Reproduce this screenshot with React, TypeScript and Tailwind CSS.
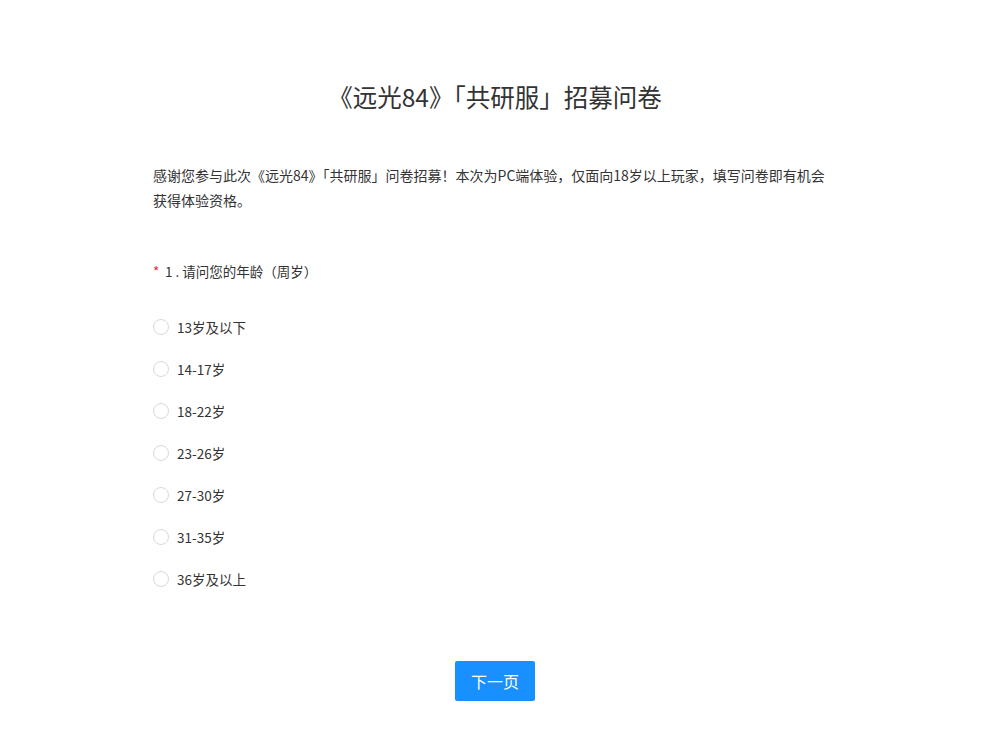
import { useState } from 'react';

const options = ['13岁及以下', '14-17岁', '18-22岁', '23-26岁', '27-30岁', '31-35岁', '36岁及以上'];

export default function App() {
    const [picked, setPicked] = useState<number | null>(null);

    return (
        <div className="min-h-screen bg-white text-[#333] font-['Noto_Sans_CJK_SC','Noto_Sans',sans-serif]">
            <div className="w-[684px] mx-auto pt-[79px] pb-7">
                {/* Titel */}
                <h1 className="text-center text-[24.5px] leading-9 font-normal">《远光84》「共研服」招募问卷</h1>

                {/* Einleitung */}
                <p className="mt-[48px] text-[14px] leading-[25px]">
                    感谢您参与此次《远光84》「共研服」问卷招募！本次为PC端体验，仅面向18岁以上玩家，填写问卷即有机会获得体验资格。
                </p>

                {/* Frage */}
                <div className="mt-[48px] text-[13.5px] leading-5 flex items-center">
                    <span className="text-[#f5222d] w-3">*</span>
                    <span>1 . 请问您的年龄（周岁）</span>
                </div>

                <div className="mt-[25px] flex flex-col">
                    {options.map((opt, i) => (
                        <label key={opt} className="h-[42px] flex items-center cursor-pointer text-[13.5px]">
                            <input
                                type="radio"
                                name="age"
                                className="sr-only"
                                checked={picked === i}
                                onChange={() => setPicked(i)}
                            />
                            <span className="w-4 h-4 rounded-full border border-[#d9d9d9] bg-white flex items-center justify-center">
                                {picked === i && <span className="w-2 h-2 rounded-full bg-[#1890ff]" />}
                            </span>
                            <span className="ml-2">{opt}</span>
                        </label>
                    ))}
                </div>

                <div className="mt-[61px] flex justify-center">
                    <button className="w-20 h-10 rounded-[2px] bg-[#1890ff] text-white text-base">下一页</button>
                </div>
            </div>
        </div>
    );
}
